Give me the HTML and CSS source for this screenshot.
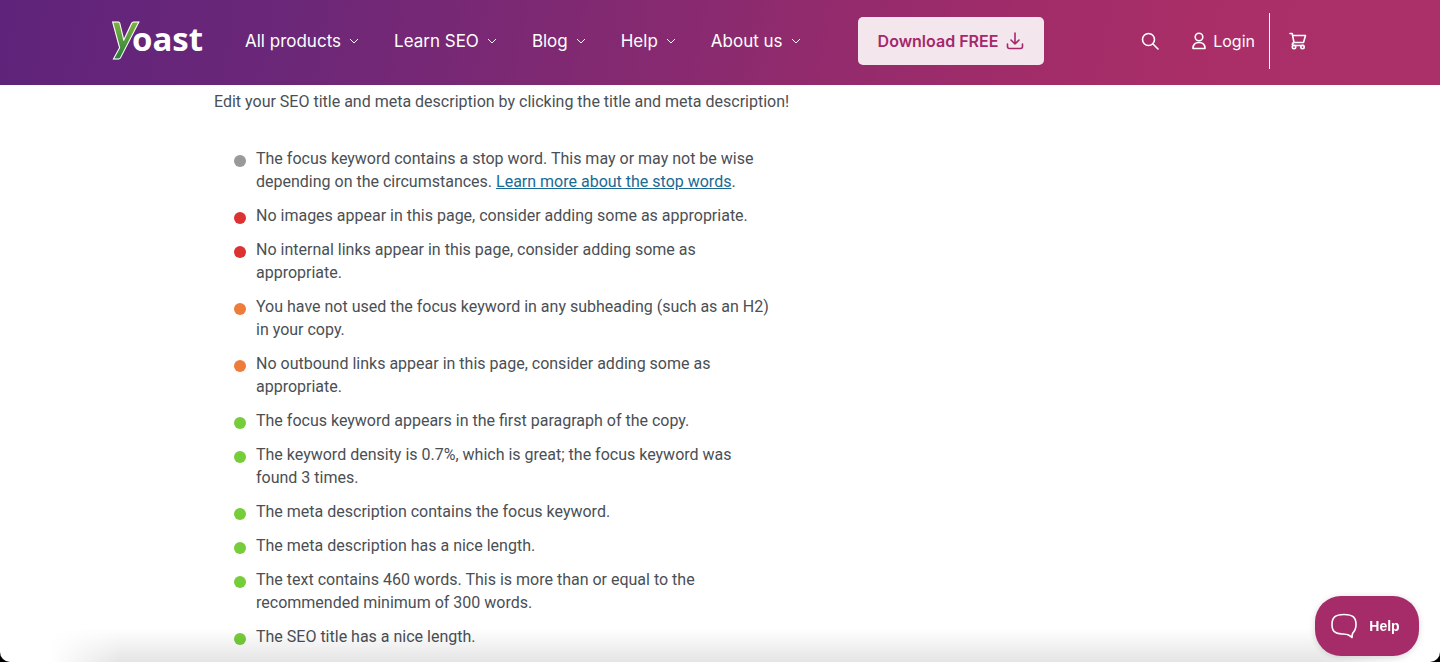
FILE: index.html
```
<!DOCTYPE html>
<html lang="en">
<head>
    <meta charset="UTF-8">
    <meta name="viewport" content="width=device-width, initial-scale=1.0">
    <title>Yoast</title>
    <link rel="stylesheet" href="styles.css">
</head>
<body>
    <header class="site-header">
        <div class="header-inner">
            <a class="logo" href="#" aria-label="yoast">
                <svg width="92" height="44" viewBox="0 0 92 44">
                    <defs>
                        <linearGradient id="leaf" x1="0" y1="0" x2="0" y2="1">
                            <stop offset="0.3" stop-color="#8dbb3f"/>
                            <stop offset="1" stop-color="#1f7a3c"/>
                        </linearGradient>
                    </defs>
                    <text class="logo-text" x="20" y="32">oast</text>
                    <text class="logo-y" x="-1" y="31">y</text>
                </svg>
            </a>
            <nav class="main-nav">
                <button class="nav-item">All products <svg class="chevron" viewBox="0 0 10 6"><path d="M1 1l4 4 4-4"/></svg></button>
                <button class="nav-item">Learn SEO <svg class="chevron" viewBox="0 0 10 6"><path d="M1 1l4 4 4-4"/></svg></button>
                <button class="nav-item">Blog <svg class="chevron" viewBox="0 0 10 6"><path d="M1 1l4 4 4-4"/></svg></button>
                <button class="nav-item">Help <svg class="chevron" viewBox="0 0 10 6"><path d="M1 1l4 4 4-4"/></svg></button>
                <button class="nav-item">About us <svg class="chevron" viewBox="0 0 10 6"><path d="M1 1l4 4 4-4"/></svg></button>
            </nav>
            <a class="download" href="#">Download FREE
                <svg class="icon" width="18" height="18" viewBox="0 0 18 18"><path d="M9 1v11M5 8l4 4 4-4M1.500 12v2.500a2 2 0 0 0 2 2h11a2 2 0 0 0 2-2V12"/></svg>
            </a>
            <div class="tools">
                <button class="search" aria-label="Search">
                    <svg class="icon" width="18" height="18" viewBox="0 0 18 18"><circle cx="7.500" cy="7.500" r="6"/><path d="M12 12l5 5"/></svg>
                </button>
                <a class="login" href="#">
                    <svg class="icon" width="16" height="18" viewBox="0 0 16 18"><circle cx="8" cy="5" r="3.800"/><path d="M2 16.500c0-4 2.500-6 6-6s6 2 6 6z"/></svg>
                    Login
                </a>
                <a class="cart" href="#" aria-label="Cart">
                    <svg class="icon" width="18" height="18" viewBox="0 0 18 18"><path d="M1 1.500h2.200l1.800 9h9.500l2-7H3.700M5 10.500c-2 .5-2.400 3-.2 3h9.700"/><circle cx="5" cy="15" r="1.700"/><circle cx="13.500" cy="15" r="1.700"/></svg>
                </a>
            </div>
        </div>
    </header>

    <main class="content">
        <p class="intro">Edit your SEO title and meta description by clicking the title and meta description!</p>
        <ul class="checks">
            <li class="check grey">The focus keyword contains a stop word. This may or may not be wise depending on the circumstances. <a href="#">Learn more about the stop words</a>.</li>
            <li class="check red">No images appear in this page, consider adding some as appropriate.</li>
            <li class="check red">No internal links appear in this page, consider adding some as appropriate.</li>
            <li class="check orange">You have not used the focus keyword in any subheading (such as an H2) in your copy.</li>
            <li class="check orange">No outbound links appear in this page, consider adding some as appropriate.</li>
            <li class="check green">The focus keyword appears in the first paragraph of the copy.</li>
            <li class="check green">The keyword density is 0.7%, which is great; the focus keyword was found 3 times.</li>
            <li class="check green">The meta description contains the focus keyword.</li>
            <li class="check green">The meta description has a nice length.</li>
            <li class="check green">The text contains 460 words. This is more than or equal to the recommended minimum of 300 words.</li>
            <li class="check green">The SEO title has a nice length.</li>
        </ul>
    </main>

    <div class="bottom-fade"></div>
    <button class="help-button">
        <svg class="icon" width="28" height="28" viewBox="0 0 28 28"><path d="M14 2.500C5 2.500 2 5.500 2 12.500s3 9 10 9.500c2.500.2 5 .3 6.500 1 1 .5 2 1.500 3.500 2.500 0-2 0-3 .8-4.500 2-2 3.200-4.500 3.200-8.500 0-7-3-10-12-10z"/></svg>
        Help
    </button>
</body>
</html>
```
FILE: styles.css
```
* {
  box-sizing: border-box;
}

body {
  margin: 0;
  min-height: 100vh;
  background-color: #fff;
  color: #4a4f55;
  font-family: Roboto, "Liberation Sans", sans-serif;
  font-size: 16px;
}

/* rounded window corners */
body::after {
  content: "";
  position: fixed;
  inset: 0;
  border-radius: 0 0 10px 10px;
  box-shadow: 0 0 0 10px #000;
  pointer-events: none;
}

a {
  color: inherit;
  text-decoration: none;
}

button {
  padding: 0;
  border: none;
  background: none;
  color: inherit;
  font: inherit;
  cursor: pointer;
}

.icon {
  fill: none;
  stroke: currentColor;
  stroke-width: 1.6;
  stroke-linecap: round;
  stroke-linejoin: round;
}

/* header */
.site-header {
  background: linear-gradient(100deg, #5f237b 0%, #6b2778 20%, #a02c69 70%, #aa2e67 85%, #ab2f68 100%);
  color: #fff;
  font-family: Inter, "Liberation Sans", sans-serif;
}

.header-inner {
  display: flex;
  align-items: center;
  max-width: 1216px;
  height: 85px;
  margin: 0 auto;
  padding: 0 21px 4px 0;
}

.logo {
  display: flex;
}

.logo svg {
  overflow: visible;
}

.logo-text {
  fill: #fff;
  font: bold 33px "Open Sans", sans-serif;
}

.logo-y {
  fill: url(#leaf);
  stroke: #fff;
  stroke-width: 1;
  font: italic bold 54px Lato, sans-serif;
}

.main-nav {
  display: flex;
  gap: 35px;
  margin-left: 41px;
  font-size: 17px;
}

.nav-item {
  display: flex;
  align-items: center;
  gap: 8px;
  white-space: nowrap;
}

.chevron {
  width: 10px;
  height: 6px;
  fill: none;
  stroke: #fff;
}

.download {
  display: flex;
  align-items: center;
  gap: 8px;
  height: 48px;
  margin-left: 57px;
  padding: 0 20px;
  border-radius: 5px;
  background-color: #f4e6ed;
  color: #a4286a;
  font-weight: 600;
  white-space: nowrap;
}

.tools {
  display: flex;
  align-items: center;
  margin-left: auto;
}

.search,
.cart {
  display: flex;
}

.login {
  display: flex;
  align-items: center;
  gap: 6px;
  height: 56px;
  margin: 0 19px 0 32px;
  padding-right: 14px;
  border-right: 1px solid #fff;
}

/* analysis */
.content {
  width: 100%;
  max-width: 1012px;
  margin: 0 auto;
}

.intro {
  margin: 0;
  padding: 5px 0;
  line-height: 23px;
}

.checks {
  display: flex;
  flex-direction: column;
  gap: 11px;
  max-width: 560px;
  margin: 29px 0 0;
  padding: 0 0 0 20px;
  list-style: none;
}

.check {
  display: flow-root;
  padding-left: 22px;
  line-height: 23px;
}

.check::before {
  content: "";
  float: left;
  width: 12px;
  height: 12px;
  margin: 8px 0 0 -22px;
  border-radius: 50%;
  background-color: #999;
}

.check a {
  color: #1a6a94;
  text-decoration: underline;
}

.red::before {
  background-color: #dc3232;
}

.orange::before {
  background-color: #ee7c3b;
}

.green::before {
  background-color: #77cc3a;
}

/* floating parts */
.bottom-fade {
  position: fixed;
  right: 0;
  bottom: 0;
  left: 0;
  height: 34px;
  background: linear-gradient(rgba(0, 0, 0, 0), rgba(0, 0, 0, 0.1));
  mask-image: linear-gradient(90deg, transparent 50px, #000 120px, #000 calc(100% - 120px), transparent calc(100% - 30px));
  pointer-events: none;
}

.help-button {
  position: fixed;
  right: 21px;
  bottom: 6px;
  display: flex;
  align-items: center;
  justify-content: center;
  gap: 11px;
  width: 104px;
  height: 60px;
  padding-right: 4px;
  border-radius: 26px;
  background-color: #a52c69;
  box-shadow: 0 1px 6px rgba(0, 0, 0, 0.15);
  color: #fff;
  font: bold 14px "Liberation Sans", sans-serif;
}
```
